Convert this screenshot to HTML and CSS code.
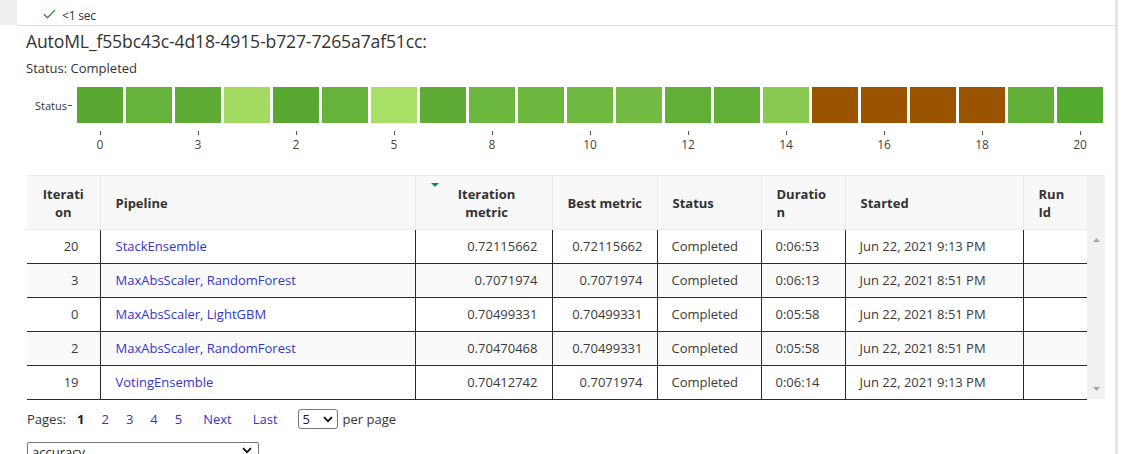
FILE: index.html
```html
<!DOCTYPE html>
<html lang="en">
<head>
<meta charset="utf-8">
<title>AutoML run</title>
<link rel="stylesheet" href="styles.css">
</head>
<body>
<div class="page">
  <div class="topbar">
    <div class="gutter"></div>
    <div class="exec">
      <svg class="check" width="13" height="10" viewBox="0 0 13 10"><path d="M0.8 5.2 L4.4 8.8 L12.2 0.9" fill="none" stroke="#2f8f2f" stroke-width="1.3"/></svg>
      <span class="exec-time">&lt;1 sec</span>
    </div>
  </div>
  <div class="content">
    <h1 class="title">AutoML_f55bc43c-4d18-4915-b727-7265a7af51cc:</h1>
    <div class="run-status">Status: Completed</div>

    <div class="chart">
      <div class="chart-row">
        <div class="ylabel">Status<span class="ytick"></span></div>
        <div class="blocks">
          <div class="blk g-a"></div><div class="blk g-b"></div><div class="blk g-c"></div><div class="blk g-l1"></div>
          <div class="blk g-a"></div><div class="blk g-b"></div><div class="blk g-l2"></div><div class="blk g-c"></div>
          <div class="blk g-d"></div><div class="blk g-d"></div><div class="blk g-e"></div><div class="blk g-f"></div>
          <div class="blk g-g"></div><div class="blk g-g"></div><div class="blk g-l3"></div>
          <div class="blk fail"></div><div class="blk fail"></div><div class="blk fail"></div><div class="blk fail"></div>
          <div class="blk g-g"></div><div class="blk g-h"></div>
        </div>
      </div>
      <div class="xaxis">
        <div class="xt"><span class="tick"></span><span class="xl">0</span></div><div class="xt"></div>
        <div class="xt"><span class="tick"></span><span class="xl">3</span></div><div class="xt"></div>
        <div class="xt"><span class="tick"></span><span class="xl">2</span></div><div class="xt"></div>
        <div class="xt"><span class="tick"></span><span class="xl">5</span></div><div class="xt"></div>
        <div class="xt"><span class="tick"></span><span class="xl">8</span></div><div class="xt"></div>
        <div class="xt"><span class="tick"></span><span class="xl">10</span></div><div class="xt"></div>
        <div class="xt"><span class="tick"></span><span class="xl">12</span></div><div class="xt"></div>
        <div class="xt"><span class="tick"></span><span class="xl">14</span></div><div class="xt"></div>
        <div class="xt"><span class="tick"></span><span class="xl">16</span></div><div class="xt"></div>
        <div class="xt"><span class="tick"></span><span class="xl">18</span></div><div class="xt"></div>
        <div class="xt"><span class="tick"></span><span class="xl">20</span></div>
      </div>
    </div>

    <table class="runs">
      <colgroup>
        <col class="w-iter"><col class="w-pipe"><col class="w-im"><col class="w-bm"><col class="w-st"><col class="w-dur"><col class="w-start"><col class="w-run"><col class="w-sb">
      </colgroup>
      <thead>
        <tr>
          <th class="h-center">Iterati<br>on</th>
          <th>Pipeline</th>
          <th class="h-im"><span class="sort"></span>Iteration<br>metric</th>
          <th>Best metric</th>
          <th>Status</th>
          <th>Duratio<br>n</th>
          <th>Started</th>
          <th>Run<br>Id</th>
          <th class="h-sb"></th>
        </tr>
      </thead>
      <tbody>
        <tr>
          <td class="num iter">20</td>
          <td class="pipe"><a href="#">StackEnsemble</a></td>
          <td class="num">0.72115662</td>
          <td class="num">0.72115662</td>
          <td>Completed</td>
          <td>0:06:53</td>
          <td>Jun 22, 2021 9:13 PM</td>
          <td class="runid"></td>
          <td class="sb" rowspan="5">
            <div class="sb-inner">
              <svg width="7" height="4" viewBox="0 0 7 4"><path d="M0 4 L3.5 0 L7 4Z" fill="#a8a8a8"/></svg>
              <svg width="7" height="4" viewBox="0 0 7 4"><path d="M0 0 L3.5 4 L7 0Z" fill="#a8a8a8"/></svg>
            </div>
          </td>
        </tr>
        <tr class="alt">
          <td class="num iter">3</td>
          <td class="pipe"><a href="#">MaxAbsScaler, RandomForest</a></td>
          <td class="num">0.7071974</td>
          <td class="num">0.7071974</td>
          <td>Completed</td>
          <td>0:06:13</td>
          <td>Jun 22, 2021 8:51 PM</td>
          <td class="runid"></td>
        </tr>
        <tr>
          <td class="num iter">0</td>
          <td class="pipe"><a href="#">MaxAbsScaler, LightGBM</a></td>
          <td class="num">0.70499331</td>
          <td class="num">0.70499331</td>
          <td>Completed</td>
          <td>0:05:58</td>
          <td>Jun 22, 2021 8:51 PM</td>
          <td class="runid"></td>
        </tr>
        <tr class="alt">
          <td class="num iter">2</td>
          <td class="pipe"><a href="#">MaxAbsScaler, RandomForest</a></td>
          <td class="num">0.70470468</td>
          <td class="num">0.70499331</td>
          <td>Completed</td>
          <td>0:05:58</td>
          <td>Jun 22, 2021 8:51 PM</td>
          <td class="runid"></td>
        </tr>
        <tr>
          <td class="num iter">19</td>
          <td class="pipe"><a href="#">VotingEnsemble</a></td>
          <td class="num">0.70412742</td>
          <td class="num">0.7071974</td>
          <td>Completed</td>
          <td>0:06:14</td>
          <td>Jun 22, 2021 9:13 PM</td>
          <td class="runid"></td>
        </tr>
      </tbody>
    </table>

    <div class="pager">
      <span class="pg-label">Pages:</span>
      <span class="pg-cur">1</span>
      <a class="pg-num" href="#">2</a>
      <a class="pg-num" href="#">3</a>
      <a class="pg-num" href="#">4</a>
      <a class="pg-num" href="#">5</a>
      <a class="pg-next" href="#">Next</a>
      <a class="pg-last" href="#">Last</a>
      <span class="sel sel-small">
        <select class="pg-size"><option>5</option><option>10</option><option>20</option></select>
        <svg class="chev" width="10" height="7" viewBox="0 0 10 7"><path d="M1 1.2 L5 5.2 L9 1.2" fill="none" stroke="#111" stroke-width="1.8"/></svg>
      </span>
      <span class="pg-per">per page</span>
    </div>

    <div class="metric-row">
      <span class="sel sel-wide">
        <select class="metric"><option>accuracy</option><option>AUC_weighted</option></select>
        <svg class="chev" width="10" height="7" viewBox="0 0 10 7"><path d="M1 1.2 L5 5.2 L9 1.2" fill="none" stroke="#111" stroke-width="1.8"/></svg>
      </span>
    </div>
  </div>
</div>
</body>
</html>
```

FILE: styles.css
```css
* { box-sizing: border-box; }
html, body { margin: 0; padding: 0; background: #fff; }
body {
  font-family: "Open Sans", "Noto Sans", sans-serif;
  color: #333;
  overflow: hidden;
}
.page {
  width: 1118px;
  height: 454px;
  border-right: 3px solid #e4e4e4;
  overflow: hidden;
}

/* top execution bar */
.topbar { display: flex; height: 26px; }
.gutter { width: 17px; height: 25px; background: #eeeeee; }
.exec {
  flex: 1;
  display: flex;
  align-items: center;
  padding: 5px 0 0 26px;
  border-bottom: 1px solid #e0e0e0;
}
.check { margin-right: 6px; margin-top: -2px; }
.exec-time { font-size: 12px; color: #333; letter-spacing: -0.2px; }

.content { padding-left: 26px; }
.title {
  margin: 3px 0 0;
  font-size: 17.6px;
  font-weight: 400;
  line-height: 24px;
  color: #333;
  letter-spacing: -0.15px;
}
.run-status {
  margin-top: 6px;
  font-size: 13px;
  line-height: 18px;
  color: #333;
}

/* chart */
.chart { margin-top: 10px; }
.chart-row { display: flex; align-items: center; }
.ylabel {
  width: 77px;
  margin-left: -26px;
  display: flex;
  align-items: center;
  justify-content: flex-end;
  padding-right: 5px;
  font-size: 11px;
  color: #333;
}
.ytick { width: 4px; height: 1px; background: #444; margin-left: 1px; }
.blocks {
  display: grid;
  grid-template-columns: repeat(21, 46px);
  gap: 3px;
}
.blk { height: 36px; }
.g-a { background: #58a832; }
.g-b { background: #66b33b; }
.g-c { background: #5eac35; }
.g-d { background: #6cb73e; }
.g-e { background: #70b940; }
.g-f { background: #73bb42; }
.g-g { background: #62af38; }
.g-h { background: #55aa30; }
.g-l1 { background: #a3db62; }
.g-l2 { background: #a8df66; }
.g-l3 { background: #87ca4f; }
.fail { background: #9a5400; }

.xaxis {
  display: grid;
  grid-template-columns: repeat(21, 46px);
  gap: 3px;
  margin-left: 51px;
  padding-top: 8px;
}
.xt { display: flex; flex-direction: column; align-items: center; }
.tick { width: 1px; height: 4px; background: #555; }
.xl { margin-top: 3px; font-size: 12px; line-height: 14px; color: #444; }

/* table */
.runs {
  margin-top: 23px;
  margin-left: 1px;
  width: 1078px;
  table-layout: fixed;
  border-collapse: collapse;
  font-size: 13px;
}
.w-iter { width: 73px; }
.w-pipe { width: 315px; }
.w-im { width: 137px; }
.w-bm { width: 105px; }
.w-st { width: 104px; }
.w-dur { width: 84px; }
.w-start { width: 178px; }
.w-run { width: 64px; }
.w-sb { width: 18px; }

.runs th {
  height: 54px;
  padding: 0 0 0 15px;
  background: #f8f8f8;
  border-top: 1px solid #ececec;
  border-bottom: 1px solid #ececec;
  border-left: 1px solid #e9e9e9;
  text-align: left;
  font-weight: 700;
  font-size: 13px;
  line-height: 18px;
  color: #333;
  position: relative;
}
.runs th:first-child { border-left: none; }
.runs th.h-center { text-align: center; padding: 0; }
.runs th.h-im { text-align: center; padding: 0 14px 0 20px; }
.runs th.h-sb { background: #f1f1f1; border-left: none; padding: 0; }
.sort {
  position: absolute;
  left: 15px;
  top: 7px;
  width: 0;
  height: 0;
  border-left: 4px solid transparent;
  border-right: 4px solid transparent;
  border-top: 4px solid #138a5e;
}

.runs td {
  height: 33px;
  padding: 0 0 0 14px;
  border-bottom: 1px solid #2b2b2b;
  border-left: 1px solid #2b2b2b;
  line-height: 18px;
  color: #3a3a3a;
  white-space: nowrap;
  font-size: 13px;
}
.runs td:first-child { border-left: none; }
.runs td.num { text-align: right; padding: 0 14px 0 0; }
.runs td.iter { padding-right: 21px; }
.runs td.pipe { padding-left: 15px; }
.runs tr.alt td { background: #fafafa; }
.runs td.sb {
  background: #f1f1f1;
  border-left: none;
  border-bottom: none;
  padding: 0;
  vertical-align: top;
}
.sb-inner {
  height: 169px;
  display: flex;
  flex-direction: column;
  justify-content: space-between;
  align-items: center;
  padding: 8px 0 8px;
}
.runs a { color: #3535c8; text-decoration: none; }

/* pager */
.pager {
  display: flex;
  align-items: center;
  height: 20px;
  margin-top: 9px;
  margin-left: 1px;
  font-size: 13px;
  color: #333;
}
.pager a { color: #3535c8; text-decoration: none; }
.pg-cur { margin-left: 11px; font-weight: 700; color: #222; }
.pg-num { margin-left: 17px; }
.pg-next { margin-left: 21px; }
.pg-last { margin-left: 21px; }
.sel { position: relative; display: inline-block; }
.sel select {
  appearance: none;
  -webkit-appearance: none;
  font-family: "Open Sans", sans-serif;
  font-size: 13px;
  color: #222;
  background: #fff;
  border: 1px solid #767676;
  border-radius: 3px;
  height: 20px;
  line-height: 18px;
  padding: 0 0 0 4px;
  margin: 0;
}
.chev { position: absolute; top: 7px; pointer-events: none; }
.sel-small { margin-left: 20px; }
.sel-small select { width: 40px; }
.sel-small .chev { left: 25px; }
.pg-per { margin-left: 5px; }

.metric-row { margin-top: 11px; margin-left: 1px; }
.sel-wide select { width: 232px; border-radius: 2px; }
.sel-wide .chev { left: 215px; }
```
